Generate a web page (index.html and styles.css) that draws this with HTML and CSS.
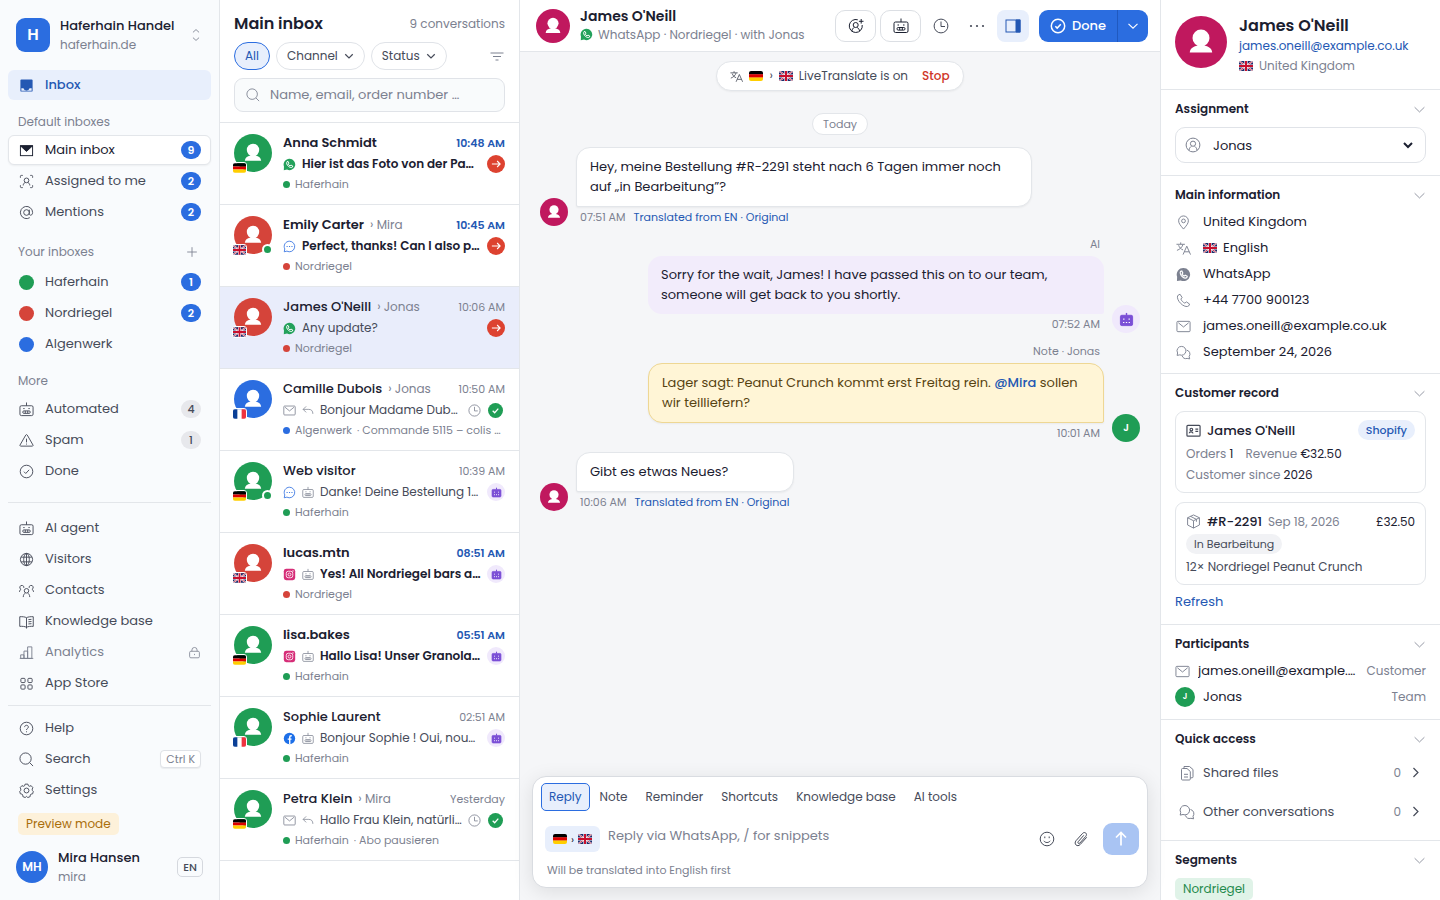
FILE: index.html
```html
<!DOCTYPE html>
<html lang="en">
<head>
    <meta charset="UTF-8">
    <meta name="viewport" content="width=device-width, initial-scale=1.0">
    <title>Main inbox - Haferhain Handel</title>
    <link rel="stylesheet" href="styles.css">
</head>
<body>

<!-- icon sprite -->
<svg class="sprite" aria-hidden="true">
    <symbol id="i-inbox" viewBox="0 0 16 16"><path fill="currentColor" stroke="none" d="M2.500 1.500h11a1 1 0 0 1 1 1v11a1 1 0 0 1-1 1h-11a1 1 0 0 1-1-1v-11a1 1 0 0 1 1-1zM2.500 11v2.500h11V11h-2.200a3.500 3.500 0 0 1-6.600 0z"/></symbol>
    <symbol id="i-mailfill" viewBox="0 0 16 16"><rect x="1.500" y="3" width="13" height="10.500"/><path fill="currentColor" d="M1.500 3h13L8 9z"/></symbol>
    <symbol id="i-frameuser" viewBox="0 0 16 16"><path d="M1.500 4V2.500a1 1 0 0 1 1-1H4M12 1.500h1.500a1 1 0 0 1 1 1V4M14.500 12v1.500a1 1 0 0 1-1 1H12M4 14.500H2.500a1 1 0 0 1-1-1V12M4.500 12.200c0-2 1-2.700 2.300-3M11.500 12.200c0-2-1-2.700-2.300-3"/><circle cx="8" cy="6.800" r="2.500"/></symbol>
    <symbol id="i-at" viewBox="0 0 16 16"><circle cx="8" cy="8" r="3"/><path d="M11 5v4.200c0 2.600 3.500 2.200 3.500-1.200a6.500 6.500 0 1 0-3 5.500"/></symbol>
    <symbol id="i-robot" viewBox="0 0 16 16"><rect x="1" y="4" width="14" height="10.500" rx="1.500"/><path d="M8 .5V4M4.500 7h1.500M10 7h1.500"/><rect x="4" y="9.500" width="8" height="2.600" rx="1.200"/><path d="M6.700 9.500V12M9.300 9.500V12"/></symbol>
    <symbol id="i-robotfill" viewBox="0 0 16 16"><path stroke-width="1.500" d="M8 1v3"/><rect x="1.500" y="3.500" width="13" height="11" rx="1.500" fill="currentColor"/><path stroke="#fff" stroke-width="1.300" d="M4.500 7.500h1.300M10.200 7.500h1.300M4.300 11.200h1.400M7.300 11.200h1.400M10.300 11.200h1.400"/></symbol>
    <symbol id="i-warn" viewBox="0 0 16 16"><path d="M7.200 2.200a1 1 0 0 1 1.600 0l6.100 10.600a.8.8 0 0 1-.7 1.200H1.800a.8.8 0 0 1-.7-1.200zM8 6v4M8 11.300v1"/></symbol>
    <symbol id="i-check" viewBox="0 0 16 16"><circle cx="8" cy="8" r="6.700"/><path d="M5.300 8.200l1.900 1.900 3.600-3.900"/></symbol>
    <symbol id="i-globe" viewBox="0 0 16 16"><circle cx="8" cy="8" r="6.500"/><ellipse cx="8" cy="8" rx="3" ry="6.500"/><path d="M2.200 5.500h11.600M2.200 10.500h11.600M8 1.500v13"/></symbol>
    <symbol id="i-users" viewBox="0 0 16 16"><circle cx="8" cy="8.300" r="2.400"/><path d="M4.500 15c.2-2.500 1-3.500 2.300-4.300M11.500 15c-.2-2.500-1-3.500-2.300-4.300M5.200 5.200a2.200 2.200 0 1 0-3 1.600C1.100 7.300.6 8.200.5 9.500M10.800 5.200a2.200 2.200 0 1 1 3 1.600c1.100.5 1.600 1.400 1.700 2.700"/></symbol>
    <symbol id="i-book" viewBox="0 0 16 16"><path d="M8 4C6.500 3 3.500 2.700.8 2.900v10.300c2.700-.2 5.700 0 7.200 1 1.500-1 4.500-1.200 7.200-1V2.900C12.500 2.700 9.500 3 8 4zM8 4v11.500M10 6l3.300-.3M10 8.300l3.300-.3M10 10.600l3.300-.3"/></symbol>
    <symbol id="i-chart" viewBox="0 0 16 16"><path d="M1.800 10.500h3.500v3.800H1.800zM5.300 6.500h3.900v7.800H5.300zM9.200 2h4.500v12.300H9.200zM.8 14.300h14.400"/></symbol>
    <symbol id="i-grid" viewBox="0 0 16 16"><rect x="2" y="2.500" width="4.500" height="4.500" rx="1"/><rect x="9.500" y="2.500" width="4.500" height="4.500" rx="1"/><rect x="2" y="9.500" width="4.500" height="4.500" rx="1"/><rect x="9.500" y="9.500" width="4.500" height="4.500" rx="1"/></symbol>
    <symbol id="i-help" viewBox="0 0 16 16"><circle cx="8" cy="8" r="6.700"/><path d="M6 6.500c0-2.600 4-2.600 4 0C10 8 8 7.900 8 9.600M8 11v1"/></symbol>
    <symbol id="i-search" viewBox="0 0 16 16"><circle cx="7" cy="7" r="6"/><path d="M11.400 11.400L15 15"/></symbol>
    <symbol id="i-gear" viewBox="0 0 16 16"><circle cx="8" cy="8" r="2.600"/><path d="M6.500 1.200h3l.5 1.700 1.200.6 1.700-.7 1.900 2.200-.8 1.500.3 1.500.9.9-.6 2.600-1.700.3-.9 1-.1 1.700-2.500 1L8 14.300l-1.400 1.200-2.500-1-.1-1.700-.9-1-1.700-.3-.6-2.600.9-.9.3-1.500-.8-1.500 1.900-2.200 1.700.7 1.200-.6z"/></symbol>
    <symbol id="i-plus" viewBox="0 0 16 16"><path d="M8 2.500v11M2.500 8h11"/></symbol>
    <symbol id="i-lock" viewBox="0 0 16 16"><rect x="2" y="6.500" width="12" height="8" rx="1.500"/><path d="M4.800 6.500V5a3.200 3.200 0 0 1 6.400 0v1.500M8 9.700v1.500"/></symbol>
    <symbol id="i-updown" viewBox="0 0 10 16"><path d="M1.500 5L5 1.800 8.500 5M1.500 11L5 14.200 8.500 11"/></symbol>
    <symbol id="i-down" viewBox="0 0 16 16"><path d="M2 5.200L8 11l6-5.800"/></symbol>
    <symbol id="i-right" viewBox="0 0 16 16"><path d="M5.500 2.500L11 8l-5.500 5.500"/></symbol>
    <symbol id="i-filter" viewBox="0 0 16 16"><path d="M1.500 5h13M4 8.500h8M6.500 12h3"/></symbol>
    <symbol id="i-whatsapp" viewBox="0 0 16 16"><path fill="currentColor" stroke="none" d="M8 1a7 7 0 1 1-3 13.300L1 15l.2-4.500A7 7 0 0 1 8 1z"/><path fill="none" stroke="#fff" stroke-width="1.200" d="M5 4.500l1.200-.3 1.100 2.200-.9 1.200c.6 1.100 1.300 1.700 2.300 2.100l1.100-1 2.200 1.200-.4 1.300c-1 1-3 .6-4.800-.8C4.800 8.800 3.800 6 5 4.500z"/></symbol>
    <symbol id="i-chat" viewBox="0 0 16 16"><path d="M8 1.500a6.500 6.500 0 1 1-3.200 12.200L1.500 14.500l.7-3.500A6.500 6.500 0 0 1 8 1.500z"/><path stroke-width="1.500" stroke-linecap="round" d="M5 8h.1M8 8h.1M11 8h.1"/></symbol>
    <symbol id="i-instagram" viewBox="0 0 16 16"><rect x="1" y="1" width="14" height="14" rx="3" fill="currentColor" stroke="none"/><rect x="4" y="4" width="8" height="8" rx="2.500" stroke="#fff"/><circle cx="8" cy="8" r="1.800" stroke="#fff"/><circle cx="12.300" cy="3.600" r=".8" fill="#fff" stroke="none"/></symbol>
    <symbol id="i-facebook" viewBox="0 0 16 16"><circle cx="8" cy="8" r="7" fill="currentColor" stroke="none"/><path stroke="#fff" stroke-width="1.700" d="M10.800 4.600H9.900C8.800 4.600 8.300 5.200 8.300 6.200V15M5.800 8.700h4.700"/></symbol>
    <symbol id="i-mail" viewBox="0 0 16 16"><rect x="1" y="2.500" width="14" height="11" rx="1"/><path d="M2.500 4L8 8.500 13.500 4"/></symbol>
    <symbol id="i-reply" viewBox="0 0 16 16"><path d="M5.500 2.500L1.500 6.500l4 4M1.500 6.500H9c3.500 0 5.500 2 5.500 6"/></symbol>
    <symbol id="i-clock" viewBox="0 0 16 16"><circle cx="8" cy="8" r="6.900"/><path d="M8 3.500V8.500h4"/></symbol>
    <symbol id="i-arrow" viewBox="0 0 16 16"><path stroke-width="1.500" d="M2.500 8h11M9.500 4l4 4-4 4"/></symbol>
    <symbol id="i-tick" viewBox="0 0 16 16"><path stroke-width="2.200" d="M3 8.500l3.500 3.500L13 4.500"/></symbol>
    <symbol id="i-up" viewBox="0 0 16 16"><path stroke-width="1.700" d="M8 14.500v-13M3 6.500l5-5 5 5"/></symbol>
    <symbol id="i-person" viewBox="0 0 38 38"><g fill="#fff" stroke="none"><circle cx="19" cy="16" r="6.200"/><path d="M16.500 19h5v2.600c3.500.8 5.300 2.200 5.700 5.100H10.800c.4-2.900 2.200-4.300 5.700-5.100z"/></g></symbol>
    <symbol id="i-useradd" viewBox="0 0 16 16"><circle cx="7.700" cy="7" r="2.500"/><path d="M9.800 1.800A6.500 6.500 0 1 0 14.200 7M3.800 13.300c.3-2.300 1.400-3.300 2.500-3.800M11.600 13.300c-.3-2.300-1.400-3.300-2.500-3.800M13.200 1v4.600M10.900 3.300h4.600"/></symbol>
    <symbol id="i-usercircle" viewBox="0 0 16 16"><circle cx="8" cy="8" r="6.900"/><circle cx="8" cy="6.700" r="2.600"/><path d="M4 13.200c.3-2.300 1.400-3.300 2.500-3.900M12 13.200c-.3-2.300-1.400-3.300-2.500-3.900"/></symbol>
    <symbol id="i-dots" viewBox="0 0 16 16"><g fill="currentColor" stroke="none"><circle cx="2" cy="8" r="1.100"/><circle cx="8" cy="8" r="1.100"/><circle cx="14" cy="8" r="1.100"/></g></symbol>
    <symbol id="i-panel" viewBox="0 0 16 16"><rect x="1" y="2" width="14" height="12"/><path fill="currentColor" d="M11 2h4v12h-4z"/></symbol>
    <symbol id="i-translate" viewBox="0 0 16 16"><path d="M.5 3.500h9M5 1.500v2M7.500 3.500C6.800 6.500 4 9 1 10M2.800 4.500C3.500 7 5.500 8.800 7.500 9.500M7.500 14.500l4-9 4 9M9 11.500h5"/></symbol>
    <symbol id="i-smile" viewBox="0 0 16 16"><circle cx="8" cy="8" r="6.800"/><path d="M5.800 5.500v1.700M10.200 5.500v1.700M4.800 9.800c1.400 2.300 5 2.300 6.400 0"/></symbol>
    <symbol id="i-clip" viewBox="0 0 16 16"><path d="M10.800 4.300l-5.600 6.400c-1 1.200.5 2.500 1.600 1.400l6-6.800c2-2.500-1-5.200-3.200-2.900L3 9.700c-2.600 3.200 1.300 6.900 4.200 3.800l6.500-7.200"/></symbol>
    <symbol id="i-pin" viewBox="0 0 16 16"><path d="M8 15C5 11.500 2.800 9 2.800 6.200a5.200 5.200 0 0 1 10.400 0C13.200 9 11 11.500 8 15z"/><circle cx="8" cy="6.300" r="2"/></symbol>
    <symbol id="i-phone" viewBox="0 0 16 16"><path d="M2.300 2.300l2-1 2.200 3.500-1.300 1.700c.8 1.900 2.200 3.400 4.200 4.300l1.800-1.300 3.300 2.300-1 2c-1.500 1.200-4 .6-6.500-1C3.700 10.500 1.700 7.300 1.500 4.500c0-1 .2-1.700.8-2.200z"/></symbol>
    <symbol id="i-talks" viewBox="0 0 16 16"><path d="M6 1.500a4.700 4.700 0 1 1-2 9l-2.800.6.500-2.600A4.700 4.700 0 0 1 6 1.500z"/><path d="M11.500 5.500a4.300 4.300 0 0 1 2.500 6.800l.6 2.500-2.700-.5a4.500 4.500 0 0 1-5.400-2.800"/></symbol>
    <symbol id="i-idcard" viewBox="0 0 16 16"><rect x="1" y="2.500" width="14" height="11.500" rx="1" stroke-width="1.300"/><path stroke-width="1.300" d="M10 6.500h3M10 9h3M3.500 11c0-2 3.500-2 4 0"/><circle cx="5.700" cy="7" r="1.400" stroke-width="1.300"/></symbol>
    <symbol id="i-box" viewBox="0 0 16 16"><path d="M8 1l6.300 3v7.700L8 15l-6.300-3.300V4zM1.700 4L8 7.200 14.300 4M8 7.200V15M4.800 2.500l6.300 3.200v2.600"/></symbol>
    <symbol id="i-files" viewBox="0 0 16 16"><path d="M5 1.500h5.500L14 4.500v7.300a1 1 0 0 1-1 1h-1.500M2.500 4.500a1 1 0 0 1 1-1h4.500l3.300 3V14a1 1 0 0 1-1 1H3.500a1 1 0 0 1-1-1zM5 9.300h4M5 12h4M5 3.500v-2"/></symbol>
    <symbol id="f-de" viewBox="0 0 14 10"><path fill="#000" d="M0 0h14v3.400H0z"/><path fill="#d00" d="M0 3.300h14v3.400H0z"/><path fill="#ffce00" d="M0 6.600h14V10H0z"/></symbol>
    <symbol id="f-fr" viewBox="0 0 14 10"><path fill="#fff" d="M0 0h14v10H0z"/><path fill="#0a3f96" d="M0 0h4.700v10H0z"/><path fill="#ee3340" d="M9.300 0H14v10H9.300z"/></symbol>
    <symbol id="f-gb" viewBox="0 0 14 10"><path fill="#1d2b6b" d="M0 0h14v10H0z"/><path stroke="#fff" stroke-width="1.800" d="M0 0l14 10M14 0L0 10"/><path stroke="#c8102e" stroke-width=".8" d="M0 0l14 10M14 0L0 10"/><path stroke="#fff" stroke-width="3.200" d="M7 0v10M0 5h14"/><path stroke="#c8102e" stroke-width="2" d="M7 0v10M0 5h14"/></symbol>
</svg>

<div class="app">

    <aside class="sidebar">
        <button class="workspace">
            <span class="workspace-logo">H</span>
            <span class="who"><span class="who-name">Haferhain Handel</span><span class="who-sub">haferhain.de</span></span>
            <svg class="icon updown"><use href="#i-updown"/></svg>
        </button>

        <nav class="menu">
            <a href="#" class="menu-item active"><svg class="icon"><use href="#i-inbox"/></svg><span>Inbox</span></a>
        </nav>

        <h3 class="menu-title">Default inboxes</h3>
        <nav class="menu">
            <a href="#" class="menu-item current"><svg class="icon"><use href="#i-mailfill"/></svg><span>Main inbox</span><b class="count">9</b></a>
            <a href="#" class="menu-item"><svg class="icon"><use href="#i-frameuser"/></svg><span>Assigned to me</span><b class="count">2</b></a>
            <a href="#" class="menu-item"><svg class="icon"><use href="#i-at"/></svg><span>Mentions</span><b class="count">2</b></a>
        </nav>

        <h3 class="menu-title own">Your inboxes <button class="add" aria-label="Add inbox"><svg class="icon"><use href="#i-plus"/></svg></button></h3>
        <nav class="menu">
            <a href="#" class="menu-item"><i class="dot green"></i><span>Haferhain</span><b class="count">1</b></a>
            <a href="#" class="menu-item"><i class="dot red"></i><span>Nordriegel</span><b class="count">2</b></a>
            <a href="#" class="menu-item"><i class="dot blue"></i><span>Algenwerk</span></a>
        </nav>

        <h3 class="menu-title">More</h3>
        <nav class="menu">
            <a href="#" class="menu-item"><svg class="icon"><use href="#i-robot"/></svg><span>Automated</span><b class="count gray">4</b></a>
            <a href="#" class="menu-item"><svg class="icon"><use href="#i-warn"/></svg><span>Spam</span><b class="count gray">1</b></a>
            <a href="#" class="menu-item"><svg class="icon"><use href="#i-check"/></svg><span>Done</span></a>
        </nav>

        <nav class="menu section wide">
            <a href="#" class="menu-item"><svg class="icon"><use href="#i-robot"/></svg><span>AI agent</span></a>
            <a href="#" class="menu-item"><svg class="icon"><use href="#i-globe"/></svg><span>Visitors</span></a>
            <a href="#" class="menu-item"><svg class="icon"><use href="#i-users"/></svg><span>Contacts</span></a>
            <a href="#" class="menu-item"><svg class="icon"><use href="#i-book"/></svg><span>Knowledge base</span></a>
            <a href="#" class="menu-item locked"><svg class="icon"><use href="#i-chart"/></svg><span>Analytics</span><svg class="icon lock"><use href="#i-lock"/></svg></a>
            <a href="#" class="menu-item"><svg class="icon"><use href="#i-grid"/></svg><span>App Store</span></a>
        </nav>

        <nav class="menu section">
            <a href="#" class="menu-item"><svg class="icon"><use href="#i-help"/></svg><span>Help</span></a>
            <a href="#" class="menu-item"><svg class="icon"><use href="#i-search"/></svg><span>Search</span><kbd>Ctrl K</kbd></a>
            <a href="#" class="menu-item"><svg class="icon"><use href="#i-gear"/></svg><span>Settings</span></a>
        </nav>

        <span class="preview-mode">Preview mode</span>

        <div class="account">
            <span class="avatar a32 blue">MH</span>
            <span class="who"><span class="who-name">Mira Hansen</span><span class="who-sub">mira</span></span>
            <button class="lang">EN</button>
        </div>
    </aside>

    <section class="list">
        <header class="list-head">
            <div class="list-title"><h1>Main inbox</h1><span>9 conversations</span></div>
            <div class="filters">
                <button class="pill on">All</button>
                <button class="pill">Channel <svg class="icon"><use href="#i-down"/></svg></button>
                <button class="pill">Status <svg class="icon"><use href="#i-down"/></svg></button>
                <button class="sort" aria-label="Sort"><svg class="icon"><use href="#i-filter"/></svg></button>
            </div>
            <label class="search"><svg class="icon"><use href="#i-search"/></svg><input type="search" aria-label="Search conversations" placeholder="Name, email, order number …"></label>
        </header>

        <a href="#" class="conv unread">
            <span class="avatar a38 green"><svg><use href="#i-person"/></svg><svg class="flag"><use href="#f-de"/></svg></span>
            <div class="conv-body">
                <div class="conv-top"><strong>Anna Schmidt</strong><time>10:48 AM</time></div>
                <div class="conv-mid"><svg class="icon wa"><use href="#i-whatsapp"/></svg><p>Hier ist das Foto von der Packung, die Ecke ist eingedrückt</p><span class="state todo"><svg class="icon"><use href="#i-arrow"/></svg></span></div>
                <div class="conv-tag"><i class="dot green"></i><span>Haferhain</span></div>
            </div>
        </a>
        <a href="#" class="conv unread">
            <span class="avatar a38 red"><svg><use href="#i-person"/></svg><svg class="flag"><use href="#f-gb"/></svg><i class="online"></i></span>
            <div class="conv-body">
                <div class="conv-top"><strong>Emily Carter</strong><em>› Mira</em><time>10:45 AM</time></div>
                <div class="conv-mid"><svg class="icon web"><use href="#i-chat"/></svg><p>Perfect, thanks! Can I also pay by invoice this time?</p><span class="state todo"><svg class="icon"><use href="#i-arrow"/></svg></span></div>
                <div class="conv-tag"><i class="dot red"></i><span>Nordriegel</span></div>
            </div>
        </a>
        <a href="#" class="conv selected">
            <span class="avatar a38 red"><svg><use href="#i-person"/></svg><svg class="flag"><use href="#f-gb"/></svg></span>
            <div class="conv-body">
                <div class="conv-top"><strong>James O'Neill</strong><em>› Jonas</em><time>10:06 AM</time></div>
                <div class="conv-mid"><svg class="icon wa"><use href="#i-whatsapp"/></svg><p>Any update?</p><span class="state todo"><svg class="icon"><use href="#i-arrow"/></svg></span></div>
                <div class="conv-tag"><i class="dot red"></i><span>Nordriegel</span></div>
            </div>
        </a>
        <a href="#" class="conv">
            <span class="avatar a38 blue"><svg><use href="#i-person"/></svg><svg class="flag"><use href="#f-fr"/></svg></span>
            <div class="conv-body">
                <div class="conv-top"><strong>Camille Dubois</strong><em>› Jonas</em><time>10:50 AM</time></div>
                <div class="conv-mid"><svg class="icon"><use href="#i-mail"/></svg><svg class="icon"><use href="#i-reply"/></svg><p>Bonjour Madame Dubois, votre colis est en route</p><svg class="icon"><use href="#i-clock"/></svg><span class="state ok"><svg class="icon"><use href="#i-tick"/></svg></span></div>
                <div class="conv-tag"><i class="dot blue"></i><span>Algenwerk</span><span class="subject">· Commande 5115 – colis endommagé</span></div>
            </div>
        </a>
        <a href="#" class="conv">
            <span class="avatar a38 green"><svg><use href="#i-person"/></svg><svg class="flag"><use href="#f-de"/></svg><i class="online"></i></span>
            <div class="conv-body">
                <div class="conv-top"><strong>Web visitor</strong><time>10:39 AM</time></div>
                <div class="conv-mid"><svg class="icon web"><use href="#i-chat"/></svg><svg class="icon"><use href="#i-robot"/></svg><p>Danke! Deine Bestellung 1043 ist unterwegs</p><span class="state bot"><svg class="icon"><use href="#i-robotfill"/></svg></span></div>
                <div class="conv-tag"><i class="dot green"></i><span>Haferhain</span></div>
            </div>
        </a>
        <a href="#" class="conv unread">
            <span class="avatar a38 red"><svg><use href="#i-person"/></svg><svg class="flag"><use href="#f-gb"/></svg></span>
            <div class="conv-body">
                <div class="conv-top"><strong>lucas.mtn</strong><time>08:51 AM</time></div>
                <div class="conv-mid"><svg class="icon ig"><use href="#i-instagram"/></svg><svg class="icon"><use href="#i-robot"/></svg><p>Yes! All Nordriegel bars are vegan and gluten free</p><span class="state bot"><svg class="icon"><use href="#i-robotfill"/></svg></span></div>
                <div class="conv-tag"><i class="dot red"></i><span>Nordriegel</span></div>
            </div>
        </a>
        <a href="#" class="conv unread">
            <span class="avatar a38 green"><svg><use href="#i-person"/></svg><svg class="flag"><use href="#f-de"/></svg></span>
            <div class="conv-body">
                <div class="conv-top"><strong>lisa.bakes</strong><time>05:51 AM</time></div>
                <div class="conv-mid"><svg class="icon ig"><use href="#i-instagram"/></svg><svg class="icon"><use href="#i-robot"/></svg><p>Hallo Lisa! Unser Granola ist wieder auf Lager</p><span class="state bot"><svg class="icon"><use href="#i-robotfill"/></svg></span></div>
                <div class="conv-tag"><i class="dot green"></i><span>Haferhain</span></div>
            </div>
        </a>
        <a href="#" class="conv">
            <span class="avatar a38 green"><svg><use href="#i-person"/></svg><svg class="flag"><use href="#f-fr"/></svg></span>
            <div class="conv-body">
                <div class="conv-top"><strong>Sophie Laurent</strong><time>02:51 AM</time></div>
                <div class="conv-mid"><svg class="icon fb"><use href="#i-facebook"/></svg><svg class="icon"><use href="#i-robot"/></svg><p>Bonjour Sophie ! Oui, nous livrons en France</p><span class="state bot"><svg class="icon"><use href="#i-robotfill"/></svg></span></div>
                <div class="conv-tag"><i class="dot green"></i><span>Haferhain</span></div>
            </div>
        </a>
        <a href="#" class="conv">
            <span class="avatar a38 green"><svg><use href="#i-person"/></svg><svg class="flag"><use href="#f-de"/></svg></span>
            <div class="conv-body">
                <div class="conv-top"><strong>Petra Klein</strong><em>› Mira</em><time>Yesterday</time></div>
                <div class="conv-mid"><svg class="icon"><use href="#i-mail"/></svg><svg class="icon"><use href="#i-reply"/></svg><p>Hallo Frau Klein, natürlich können Sie pausieren</p><svg class="icon"><use href="#i-clock"/></svg><span class="state ok"><svg class="icon"><use href="#i-tick"/></svg></span></div>
                <div class="conv-tag"><i class="dot green"></i><span>Haferhain</span><span class="subject">· Abo pausieren</span></div>
            </div>
        </a>
    </section>

    <main class="chat">
        <header class="chat-head">
            <span class="avatar a34 pink"><svg><use href="#i-person"/></svg></span>
            <div class="chat-who">
                <h2>James O'Neill</h2>
                <p><svg class="icon wa"><use href="#i-whatsapp"/></svg>WhatsApp · Nordriegel · with Jonas</p>
            </div>
            <div class="tools">
                <button class="tool boxed" aria-label="Assign"><svg class="icon"><use href="#i-useradd"/></svg></button>
                <button class="tool boxed" aria-label="AI agent"><svg class="icon"><use href="#i-robot"/></svg></button>
                <button class="tool" aria-label="Snooze"><svg class="icon"><use href="#i-clock"/></svg></button>
                <button class="tool" aria-label="More"><svg class="icon"><use href="#i-dots"/></svg></button>
                <button class="tool on" aria-label="Details"><svg class="icon"><use href="#i-panel"/></svg></button>
            </div>
            <div class="split">
                <button class="done"><svg class="icon"><use href="#i-check"/></svg>Done</button>
                <button class="done-more" aria-label="More options"><svg class="icon"><use href="#i-down"/></svg></button>
            </div>
        </header>

        <div class="thread">
            <div class="live"><svg class="icon"><use href="#i-translate"/></svg><svg class="flag"><use href="#f-de"/></svg><span>›</span><svg class="flag"><use href="#f-gb"/></svg><span>LiveTranslate is on</span><button>Stop</button></div>
            <div class="day">Today</div>

            <article class="msg">
                <span class="avatar a28 pink"><svg><use href="#i-person"/></svg></span>
                <div class="msg-body">
                    <p class="bubble">Hey, meine Bestellung #R-2291 steht nach 6 Tagen immer noch auf „in Bearbeitung”?</p>
                    <div class="meta"><time>07:51 AM</time><a href="#">Translated from EN · Original</a></div>
                </div>
            </article>

            <article class="msg out">
                <span class="avatar a28 bot"><svg class="icon"><use href="#i-robotfill"/></svg></span>
                <div class="msg-body">
                    <div class="from">AI</div>
                    <p class="bubble ai">Sorry for the wait, James! I have passed this on to our team, someone will get back to you shortly.</p>
                    <div class="meta"><time>07:52 AM</time></div>
                </div>
            </article>

            <article class="msg out">
                <span class="avatar a28 green">J</span>
                <div class="msg-body">
                    <div class="from">Note · Jonas</div>
                    <p class="bubble note">Lager sagt: Peanut Crunch kommt erst Freitag rein. <a href="#">@Mira</a> sollen wir teilliefern?</p>
                    <div class="meta"><time>10:01 AM</time></div>
                </div>
            </article>

            <article class="msg">
                <span class="avatar a28 pink"><svg><use href="#i-person"/></svg></span>
                <div class="msg-body">
                    <p class="bubble">Gibt es etwas Neues?</p>
                    <div class="meta"><time>10:06 AM</time><a href="#">Translated from EN · Original</a></div>
                </div>
            </article>
        </div>

        <form class="composer">
            <div class="tabs">
                <button type="button" class="on">Reply</button>
                <button type="button">Note</button>
                <button type="button">Reminder</button>
                <button type="button">Shortcuts</button>
                <button type="button">Knowledge base</button>
                <button type="button">AI tools</button>
            </div>
            <div class="write">
                <button type="button" class="pair" aria-label="Translation languages"><svg class="flag"><use href="#f-de"/></svg><span>›</span><svg class="flag"><use href="#f-gb"/></svg></button>
                <textarea rows="1" aria-label="Reply" placeholder="Reply via WhatsApp, / for snippets"></textarea>
                <button type="button" class="attach" aria-label="Emoji"><svg class="icon"><use href="#i-smile"/></svg></button>
                <button type="button" class="attach" aria-label="Attach file"><svg class="icon"><use href="#i-clip"/></svg></button>
                <button type="button" class="send" aria-label="Send"><svg class="icon"><use href="#i-up"/></svg></button>
            </div>
            <p class="hint">Will be translated into English first</p>
        </form>
    </main>

    <aside class="details">
        <header class="person">
            <span class="avatar a52 pink"><svg><use href="#i-person"/></svg></span>
            <div>
                <h2>James O'Neill</h2>
                <a href="#">james.oneill@example.co.uk</a>
                <p><svg class="flag"><use href="#f-gb"/></svg>United Kingdom</p>
            </div>
        </header>

        <section class="block">
            <h3><label for="assignee">Assignment</label><svg class="icon"><use href="#i-down"/></svg></h3>
            <div class="assign">
                <svg class="icon"><use href="#i-usercircle"/></svg>
                <select id="assignee"><option>Jonas</option><option>Mira</option></select>
            </div>
        </section>

        <section class="block">
            <h3>Main information<svg class="icon"><use href="#i-down"/></svg></h3>
            <ul class="info">
                <li><svg class="icon"><use href="#i-pin"/></svg>United Kingdom</li>
                <li><svg class="icon"><use href="#i-translate"/></svg><svg class="flag"><use href="#f-gb"/></svg>English</li>
                <li><svg class="icon"><use href="#i-whatsapp"/></svg>WhatsApp</li>
                <li><svg class="icon"><use href="#i-phone"/></svg>+44 7700 900123</li>
                <li><svg class="icon"><use href="#i-mail"/></svg>james.oneill@example.co.uk</li>
                <li><svg class="icon"><use href="#i-talks"/></svg>September 24, 2026</li>
            </ul>
        </section>

        <section class="block">
            <h3>Customer record<svg class="icon"><use href="#i-down"/></svg></h3>
            <div class="card">
                <div class="card-top"><svg class="icon dark"><use href="#i-idcard"/></svg><strong>James O'Neill</strong><span class="tag shop">Shopify</span></div>
                <p><span>Orders</span> 1 <span class="rev">Revenue</span> €32.50</p>
                <p><span>Customer since</span> 2026</p>
            </div>
            <div class="card">
                <div class="card-top"><svg class="icon"><use href="#i-box"/></svg><strong>#R-2291</strong><small>Sep 18, 2026</small><span class="price">£32.50</span></div>
                <span class="tag">In Bearbeitung</span>
                <p class="line">12× Nordriegel Peanut Crunch</p>
            </div>
            <a href="#" class="refresh">Refresh</a>
        </section>

        <section class="block">
            <h3>Participants<svg class="icon"><use href="#i-down"/></svg></h3>
            <div class="part"><svg class="icon"><use href="#i-mail"/></svg><span class="part-name">james.oneill@example.co.uk</span><small>Customer</small></div>
            <div class="part"><span class="avatar a20 green">J</span><span class="part-name">Jonas</span><small>Team</small></div>
        </section>

        <section class="block">
            <h3>Quick access<svg class="icon"><use href="#i-down"/></svg></h3>
            <a href="#" class="quick"><svg class="icon"><use href="#i-files"/></svg><span>Shared files</span><small>0</small><svg class="icon go"><use href="#i-right"/></svg></a>
            <a href="#" class="quick"><svg class="icon"><use href="#i-talks"/></svg><span>Other conversations</span><small>0</small><svg class="icon go"><use href="#i-right"/></svg></a>
        </section>

        <section class="block">
            <h3>Segments<svg class="icon"><use href="#i-down"/></svg></h3>
            <span class="segment">Nordriegel</span>
        </section>
    </aside>

</div>
</body>
</html>
```
FILE: styles.css
```css
* {
    box-sizing: border-box;
}

body {
    margin: 0;
    font-family: Poppins, Inter, sans-serif;
    font-size: 13px;
    line-height: 20px;
    color: #1b2030;
    background-color: #fff;
}

h1, h2, h3, p, ul {
    margin: 0;
    padding: 0;
}

a {
    color: #2458b3;
    text-decoration: none;
}

button, input, textarea, select {
    font: inherit;
    color: inherit;
}

button {
    border: none;
    background: none;
    padding: 0;
    cursor: pointer;
}

em, i {
    font-style: normal;
}

.sprite {
    position: absolute;
    width: 0;
    height: 0;
}

.icon {
    width: 16px;
    height: 16px;
    flex: none;
    fill: none;
    stroke: currentColor;
    stroke-width: 1;
}

.flag {
    width: 14px;
    height: 10px;
    flex: none;
    border-radius: 2px;
}

.app {
    display: grid;
    grid-template-columns: 220px 300px 1fr 280px;
    grid-template-rows: 100%;
    height: 100vh;
    overflow: hidden;
}

/* shared bits */

.green { background-color: #1f9d55; }
.red { background-color: #d5443a; }
.blue { background-color: #2b6de0; }
.pink { background-color: #c0185e; }

.wa { color: #23a15b; }
.web { color: #2b6de0; }
.ig { color: #d62e78; }
.fb { color: #1d6fe8; }

.avatar {
    position: relative;
    display: flex;
    align-items: center;
    justify-content: center;
    flex: none;
    border-radius: 50%;
    color: #fff;
    font-weight: 600;
}

.avatar svg:first-child {
    width: 100%;
    height: 100%;
}

.a20 { width: 20px; height: 20px; font-size: 8px; }
.a28 { width: 28px; height: 28px; font-size: 10px; }
.a32 { width: 32px; height: 32px; font-size: 12px; }
.a34 { width: 34px; height: 34px; }
.a38 { width: 38px; height: 38px; }
.a52 { width: 52px; height: 52px; }

.avatar .flag {
    position: absolute;
    left: -2px;
    bottom: -2px;
    width: 15px;
    height: 12px;
    border: 1px solid #fff;
    border-radius: 3px;
}

.online {
    position: absolute;
    right: -1px;
    bottom: -1px;
    width: 11px;
    height: 11px;
    border: 2px solid #fff;
    border-radius: 50%;
    background-color: #1f9d55;
}

.avatar.bot, .state.bot {
    background-color: #f0e9fc;
    color: #7b4fd6;
}

.avatar.bot svg {
    width: 15px;
    height: 15px;
}

/* sidebar */

.sidebar {
    display: flex;
    flex-direction: column;
    padding: 16px 8px;
    border-right: 1px solid #e3e6ea;
    background-color: #f9fbfd;
    color: #464b59;
}

.workspace, .account {
    display: flex;
    align-items: center;
    gap: 10px;
    padding: 0 8px;
    text-align: left;
}

.workspace {
    height: 38px;
    margin-bottom: 16px;
}

.workspace-logo {
    width: 34px;
    height: 34px;
    border-radius: 9px;
    background-color: #2b6de0;
    color: #fff;
    font-size: 16px;
    font-weight: 600;
    line-height: 34px;
    text-align: center;
}

.who {
    flex: 1;
    display: flex;
    flex-direction: column;
}

.who-name {
    color: #1b2030;
    font-weight: 500;
    line-height: 19px;
    white-space: nowrap;
}

.who-sub {
    color: #7c8190;
    font-size: 12px;
    line-height: 19px;
}

.updown {
    width: 10px;
    height: 14px;
    margin-right: 2px;
    color: #7c8190;
}

.menu {
    display: flex;
    flex-direction: column;
    gap: 1px;
}

.menu-title {
    display: flex;
    justify-content: space-between;
    align-items: center;
    height: 20px;
    margin: 12px 10px 3px;
    color: #7c8190;
    font-size: 12px;
    font-weight: 400;
}

.menu-title.own {
    margin: 15px 10px 5px;
}

.menu-title .add, .menu-title .add svg {
    display: block;
    width: 14px;
    height: 14px;
    margin-right: 2px;
}

.menu-item {
    display: flex;
    align-items: center;
    gap: 11px;
    height: 30px;
    padding: 0 9px 0 10px;
    border: 1px solid transparent;
    border-radius: 6px;
    color: #464b59;
}

.menu-item .icon {
    width: 15px;
    height: 15px;
}

.menu-item span {
    flex: 1;
}

.menu-item.active {
    background-color: #e8effc;
    color: #2458b3;
    font-weight: 500;
}

.menu-item.current {
    border-color: #e3e6ea;
    background-color: #fff;
    color: #1b2030;
    box-shadow: 0 1px 2px rgba(0, 0, 0, 0.05);
}

.menu-item.locked {
    color: #7c8190;
}

.menu-item .lock {
    width: 13px;
    height: 13px;
}

.dot {
    width: 15px;
    height: 15px;
    border-radius: 50%;
    flex: none;
}

.count {
    min-width: 20px;
    height: 18px;
    border-radius: 9px;
    background-color: #2b6de0;
    color: #fff;
    font-size: 11px;
    font-weight: 600;
    line-height: 18px;
    text-align: center;
}

.count.gray {
    background-color: #e7e8ec;
    color: #464b59;
    font-weight: 500;
}

.menu.section {
    margin-top: 7px;
    padding-top: 7px;
    border-top: 1px solid #e3e6ea;
}

.menu.section.wide {
    margin-top: 16px;
    padding-top: 10px;
}

kbd {
    padding: 0 5px;
    border: 1px solid #dfe2e7;
    border-radius: 4px;
    background-color: #fff;
    color: #7c8190;
    font-family: inherit;
    font-size: 11px;
    line-height: 16px;
    box-shadow: 0 1px 1px rgba(0, 0, 0, 0.06);
}

.preview-mode {
    align-self: flex-start;
    margin: 8px 10px 13px;
    padding: 0 8px;
    border-radius: 5px;
    background-color: #fdf1da;
    color: #a96e0b;
    font-size: 12px;
    line-height: 22px;
}

.lang {
    width: 26px;
    height: 20px;
    border: 1px solid #d5d8de;
    border-radius: 5px;
    font-size: 11px;
    font-weight: 500;
    line-height: 18px;
}

/* conversation list */

.list {
    min-width: 0;
    border-right: 1px solid #e3e6ea;
    overflow: hidden;
}

.list-head {
    display: flex;
    flex-direction: column;
    gap: 8px;
    padding: 14px 14px 10px;
    border-bottom: 1px solid #e3e6ea;
}

.list-title {
    display: flex;
    align-items: center;
    justify-content: space-between;
    color: #7c8190;
    font-size: 12px;
}

.list-title h1 {
    color: #1b2030;
    font-size: 16px;
    font-weight: 600;
}

.filters {
    display: flex;
    align-items: center;
    gap: 6px;
}

.pill {
    display: flex;
    align-items: center;
    gap: 6px;
    height: 28px;
    padding: 0 10px;
    border: 1px solid #e0e3e8;
    border-radius: 14px;
    color: #464b59;
    font-size: 12px;
}

.pill svg {
    width: 10px;
    height: 10px;
    stroke-width: 2;
}

.pill.on {
    border-color: #2b6de0;
    background-color: #e8effc;
    color: #2458b3;
}

.sort {
    margin-left: auto;
    color: #7c8190;
}

.sort svg {
    display: block;
}

.search {
    display: flex;
    align-items: center;
    gap: 10px;
    height: 34px;
    padding: 0 11px;
    border: 1px solid #e0e3e8;
    border-radius: 9px;
    background-color: #f9fbfc;
    color: #7c8190;
}

.search svg {
    width: 14px;
    height: 14px;
}

.search input {
    flex: 1;
    min-width: 0;
    padding: 0;
    border: none;
    outline: none;
    background: none;
}

::placeholder {
    color: #7c8190;
    opacity: 1;
}

.conv {
    display: flex;
    gap: 11px;
    height: 82px;
    padding: 11px 14px 10px;
    border-bottom: 1px solid #e3e6ea;
    color: #1b2030;
}

.conv.selected {
    background-color: #e9edfb;
}

.conv-body {
    flex: 1;
    min-width: 0;
}

.conv-top {
    display: flex;
    align-items: center;
    gap: 6px;
    height: 18px;
}

.conv-top strong {
    font-weight: 500;
}

.conv-top em {
    color: #7c8190;
    font-size: 12px;
}

.conv-top time {
    margin-left: auto;
    color: #7c8190;
    font-size: 11px;
}

.conv-mid {
    display: flex;
    align-items: center;
    gap: 6px;
    height: 24px;
    color: #7c8190;
}

.conv-mid > .icon {
    width: 13px;
    height: 13px;
}

.conv-mid > .icon + .icon {
    width: 12px;
}

.conv-mid p {
    flex: 1;
    overflow: hidden;
    color: #464b59;
    font-size: 12px;
    text-overflow: ellipsis;
    white-space: nowrap;
}

.conv-tag {
    display: flex;
    align-items: center;
    gap: 5px;
    color: #7c8190;
    font-size: 11px;
    line-height: 17px;
    white-space: nowrap;
}

.conv-tag .dot {
    width: 7px;
    height: 7px;
}

.subject {
    overflow: hidden;
    text-overflow: ellipsis;
}

.unread .conv-top strong, .unread .conv-mid p {
    color: #1b2030;
    font-weight: 600;
}

.unread .conv-top time {
    color: #2458b3;
    font-weight: 600;
}

.state {
    display: flex;
    align-items: center;
    justify-content: center;
    width: 18px;
    height: 18px;
    flex: none;
    border-radius: 50%;
    color: #fff;
}

.state svg {
    width: 12px;
    height: 12px;
}

.state.bot svg {
    width: 11px;
    height: 11px;
}

.state.todo {
    background-color: #dd4230;
}

.state.ok {
    width: 15px;
    height: 15px;
    margin: 0 2px 0 1px;
    background-color: #1f9d55;
}

.state.ok svg {
    width: 9px;
    height: 9px;
}

/* chat */

.chat {
    display: flex;
    flex-direction: column;
    min-width: 0;
    background-color: #f5f6f8;
}

.chat-head {
    display: flex;
    align-items: center;
    gap: 10px;
    height: 52px;
    padding: 0 12px 0 16px;
    border-bottom: 1px solid #e3e6ea;
    background-color: #fff;
}

.chat-who {
    flex: 1;
    white-space: nowrap;
}

.chat-who h2 {
    font-size: 14px;
    font-weight: 600;
    line-height: 18px;
}

.chat-who p {
    display: flex;
    align-items: center;
    gap: 5px;
    color: #7c8190;
    font-size: 12px;
}

.chat-who .icon {
    width: 13px;
    height: 13px;
}

.tools {
    display: flex;
    gap: 4px;
}

.tool {
    display: flex;
    align-items: center;
    justify-content: center;
    width: 32px;
    height: 32px;
    border-radius: 8px;
    color: #464b59;
}

.tool.boxed {
    width: 41px;
    border: 1px solid #dcdfe4;
    border-radius: 10px;
    color: #1b2030;
}

.tool.on {
    background-color: #e8effc;
    color: #2458b3;
}

.split {
    display: flex;
    height: 32px;
    border-radius: 9px;
    background-color: #2b6de0;
    color: #fff;
    overflow: hidden;
}

.done {
    display: flex;
    align-items: center;
    gap: 6px;
    padding: 0 11px;
    border-right: 1px solid #2059c0;
    font-weight: 500;
}

.done .icon {
    stroke-width: 1.5;
}

.done-more {
    display: flex;
    align-items: center;
    padding: 0 9px;
}

.done-more svg {
    width: 12px;
    height: 12px;
    stroke-width: 1.5;
}

.thread {
    flex: 1;
    display: flex;
    flex-direction: column;
    gap: 10px;
    padding: 9px 20px;
}

.live {
    display: flex;
    align-items: center;
    align-self: center;
    gap: 6px;
    height: 30px;
    margin-bottom: 12px;
    padding: 0 13px;
    border: 1px solid #e3e6ea;
    border-radius: 15px;
    background-color: #fff;
    color: #464b59;
    font-size: 12px;
    box-shadow: 0 1px 2px rgba(0, 0, 0, 0.05);
}

.live .icon {
    width: 13px;
    height: 13px;
}

.live button {
    margin-left: 8px;
    color: #cf3527;
    font-weight: 500;
}

.day {
    align-self: center;
    margin-bottom: 2px;
    padding: 0 10px;
    border: 1px solid #e3e6ea;
    border-radius: 11px;
    background-color: #fff;
    color: #7c8190;
    font-size: 11px;
}

.msg {
    display: flex;
    align-items: flex-end;
    gap: 8px;
}

.msg.out {
    flex-direction: row-reverse;
}

.msg-body {
    max-width: 76%;
}

.bubble {
    padding: 9px 13px;
    border: 1px solid #e3e6ea;
    border-radius: 14px 14px 14px 2px;
    background-color: #fff;
    box-shadow: 0 1px 2px rgba(0, 0, 0, 0.05);
}

.out .bubble {
    border-radius: 14px 14px 2px 14px;
}

.bubble.ai {
    border: none;
    background-color: #f2ecfb;
    box-shadow: none;
}

.bubble.note {
    border-color: #eed794;
    background-color: #fff5d6;
    color: #574312;
}

.bubble.note a {
    font-weight: 500;
}

.from {
    margin-bottom: 3px;
    padding: 0 4px;
    color: #7c8190;
    font-size: 11px;
    line-height: 17px;
    text-align: right;
}

.meta {
    display: flex;
    gap: 8px;
    margin-top: 2px;
    padding: 0 4px;
    color: #7c8190;
    font-size: 11px;
    line-height: 17px;
}

.out .meta {
    justify-content: flex-end;
}

.composer {
    margin: 0 12px 12px;
    padding: 6px 8px 7px;
    border: 1px solid #d9dce1;
    border-radius: 14px;
    background-color: #fff;
    box-shadow: 0 4px 20px rgba(0, 0, 0, 0.1);
}

.tabs {
    display: flex;
    gap: 2px;
}

.tabs button {
    height: 28px;
    padding: 0 7px;
    border: 1px solid transparent;
    border-radius: 5px;
    color: #464b59;
    font-size: 12px;
}

.tabs .on {
    border-color: #2b6de0;
    background-color: #e8effc;
    color: #2458b3;
}

.write {
    display: flex;
    align-items: center;
    margin: 12px 0 5px 4px;
}

.pair {
    display: flex;
    align-items: center;
    gap: 4px;
    height: 26px;
    padding: 0 8px;
    border-radius: 6px;
    background-color: #e8effc;
    font-size: 11px;
}

.write textarea {
    flex: 1;
    height: 26px;
    padding: 0 8px;
    border: none;
    outline: none;
    resize: none;
    background: none;
}

.attach {
    display: flex;
    align-items: center;
    justify-content: center;
    width: 34px;
    height: 32px;
    color: #464b59;
}

.send {
    display: flex;
    align-items: center;
    justify-content: center;
    width: 36px;
    height: 32px;
    margin-left: 5px;
    border-radius: 9px;
    background-color: #a9c4f3;
    color: #fff;
}

.hint {
    padding: 0 6px;
    color: #7c8190;
    font-size: 11px;
}

/* details panel */

.details {
    min-width: 0;
    border-left: 1px solid #e3e6ea;
    overflow: hidden;
}

.person {
    display: flex;
    gap: 12px;
    height: 90px;
    padding: 16px 14px 0;
    border-bottom: 1px solid #e3e6ea;
    font-size: 12px;
}

.person h2 {
    font-size: 16px;
    font-weight: 600;
    line-height: 20px;
}

.person a {
    display: block;
}

.person p {
    display: flex;
    align-items: center;
    gap: 6px;
    color: #7c8190;
}

.block {
    padding: 9px 14px 12px;
    border-bottom: 1px solid #e3e6ea;
}

.block h3 {
    display: flex;
    align-items: center;
    justify-content: space-between;
    margin-bottom: 4px;
    font-size: 12px;
    font-weight: 600;
}

.block h3 svg {
    width: 13px;
    height: 13px;
}

.block .icon {
    color: #7c8190;
}

.assign {
    display: flex;
    align-items: center;
    gap: 8px;
    height: 36px;
    margin-top: 8px;
    padding: 0 9px;
    border: 1px solid #e0e3e8;
    border-radius: 10px;
}

.assign select {
    flex: 1;
    border: none;
    background-color: transparent;
}

.info {
    list-style-type: none;
    margin-bottom: -4px;
}

.info li {
    display: flex;
    align-items: center;
    height: 26px;
    padding-left: 1px;
}

.info .icon {
    width: 15px;
    height: 15px;
    margin-right: 12px;
}

.info .flag {
    margin-right: 6px;
}

.card {
    margin-bottom: 9px;
    padding: 7px 10px;
    border: 1px solid #e3e6ea;
    border-radius: 9px;
    font-size: 12px;
    line-height: 21px;
}

h3 + .card {
    margin-top: 8px;
}

.card-top {
    display: flex;
    align-items: center;
    gap: 6px;
    height: 22px;
    margin-bottom: 2px;
}

.card-top .icon {
    width: 15px;
    height: 15px;
}

.card-top strong {
    font-size: 13px;
    font-weight: 500;
}

.card-top .icon.dark {
    color: #464b59;
}

.card span, .card small {
    color: #7c8190;
    font-size: 12px;
}

.card .rev {
    margin-left: 9px;
}

.card .tag {
    display: block;
    width: fit-content;
    padding: 0 8px;
    border-radius: 10px;
    background-color: #f1f2f5;
    color: #464b59;
    font-size: 11px;
    line-height: 20px;
}

.card .tag.shop {
    margin-left: auto;
    background-color: #e8effc;
    color: #2458b3;
    font-weight: 500;
}

.card .price {
    margin-left: auto;
    color: #1b2030;
}

.card .line {
    margin-top: 2px;
    color: #464b59;
}

.refresh {
    display: block;
    margin-bottom: 2px;
    line-height: 16px;
}

.part {
    display: flex;
    align-items: center;
    gap: 8px;
    height: 26px;
}

.part .icon {
    width: 15px;
    height: 15px;
}

.part:last-child, .quick:last-child {
    margin-bottom: -3px;
}

.part-name {
    flex: 1;
    min-width: 0;
    overflow: hidden;
    text-overflow: ellipsis;
}

.part small, .quick small {
    color: #7c8190;
    font-size: 12px;
}

.quick {
    display: flex;
    align-items: center;
    gap: 8px;
    height: 39px;
    padding: 0 4px;
    color: #464b59;
}

.quick span {
    flex: 1;
}

.quick .go {
    width: 13px;
    height: 13px;
    color: #464b59;
    stroke-width: 1.5;
}

.segment {
    display: block;
    width: fit-content;
    margin-top: 8px;
    padding: 0 8px;
    border-radius: 5px;
    background-color: #e0f3e8;
    color: #1f8a4c;
    font-size: 12px;
    line-height: 22px;
}
```
